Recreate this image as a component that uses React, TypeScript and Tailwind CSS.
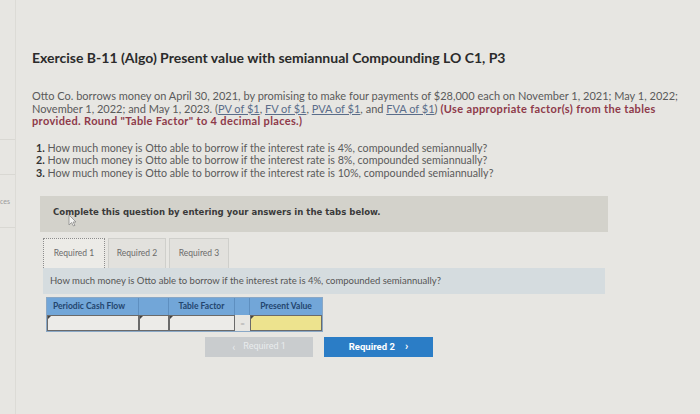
import React from "react";

const Cursor = () => (
  <svg width="9" height="13" viewBox="0 0 9 13" className="absolute left-[68px] top-[214px]">
    <path d="M1 1 L1 11 L3.5 8.5 L5.5 12 L7 11.3 L5 8 L8 8 Z" fill="#f4f4f2" stroke="#8a8a8a" strokeWidth="0.8" />
  </svg>
);

const Mark = () => (
  <span className="absolute left-0 top-0 w-0 h-0 border-l-[3px] border-l-[#444] border-b-[3px] border-b-transparent"></span>
);

export default function App() {
  return (
    <div className="relative w-[700px] h-[414px] bg-[#e7e6e2] flex overflow-hidden" style={{ fontFamily: "Lato, 'Open Sans', sans-serif" }}>
      {/* left sidebar */}
      <div className="w-[16px] shrink-0 flex flex-col pt-[139px] border-r border-[#dcdbd6]">
        <div className="h-[36px] border-y border-[#d9d8d3]"></div>
        <div className="h-[53px] border-b border-[#d9d8d3] flex items-center">
          <span className="text-[7px] text-[#9a9a9a] leading-none">ces</span>
        </div>
      </div>

      <div className="flex-1 pl-[16px] pt-[49px]">
        <h1 className="text-[14px] leading-[18px] font-bold text-[#2b2b2b]">
          Exercise B-11 (Algo) Present value with semiannual Compounding LO C1, P3
        </h1>

        <p className="mt-[23px] text-[11px] leading-[12.5px] text-[#5a5a5a] w-[670px]">
          Otto Co. borrows money on April 30, 2021, by promising to make four payments of $28,000 each on November 1, 2021; May 1, 2022;
          <br />
          November 1, 2022; and May 1, 2023. (<span className="underline text-[#5a6d8a]">PV of $1</span>,{" "}
          <span className="underline text-[#5a6d8a]">FV of $1</span>, <span className="underline text-[#5a6d8a]">PVA of $1</span>, and{" "}
          <span className="underline text-[#5a6d8a]">FVA of $1</span>){" "}
          <span className="font-bold text-[#8e3a4a] tracking-[0.35px]">
            (Use appropriate factor(s) from the tables
            <br />
            provided. Round "Table Factor" to 4 decimal places.)
          </span>
        </p>

        <ol className="mt-[14px] ml-[4px] text-[10.7px] leading-[12.5px] text-[#5a5a5a]">
          <li><span className="font-bold text-[#333]">1.</span> How much money is Otto able to borrow if the interest rate is 4%, compounded semiannually?</li>
          <li><span className="font-bold text-[#333]">2.</span> How much money is Otto able to borrow if the interest rate is 8%, compounded semiannually?</li>
          <li><span className="font-bold text-[#333]">3.</span> How much money is Otto able to borrow if the interest rate is 10%, compounded semiannually?</li>
        </ol>

        <div className="mt-[17px] ml-[8px] w-[568px] h-[36px] bg-[#d3d2cb] pl-[13px] pt-[10px]">
          <span className="block text-[9.5px] leading-[12px] font-bold text-[#3a3a3a]" style={{ fontFamily: "'DejaVu Sans Condensed', 'DejaVu Sans', sans-serif" }}>
            Complete this question by entering your answers in the tabs below.
          </span>
        </div>

        <div className="ml-[11px] mt-[6px] flex gap-[3px] h-[30px] items-stretch">
          <div className="w-[62px] border border-dotted border-[#8d8d8d] border-b-0 bg-[#ecebe7] flex items-center justify-center text-[8.5px] text-[#6a6a6a]">Required 1</div>
          <div className="w-[58px] border border-[#cfcfcb] border-b-0 bg-[#e2e1dd] flex items-center justify-center text-[8.5px] text-[#6a6a6a]">Required 2</div>
          <div className="w-[60px] border border-[#cfcfcb] border-b-0 bg-[#e2e1dd] flex items-center justify-center text-[8.5px] text-[#6a6a6a]">Required 3</div>
        </div>

        <div className="ml-[11px] w-[562px] h-[26px] bg-[#d5dcdf] pl-[7px] flex items-center text-[9.5px] text-[#555]">
          How much money is Otto able to borrow if the interest rate is 4%, compounded semiannually?
        </div>

        <div className="ml-[14px] mt-[3px] w-[277px] border border-[#8aa8c6]">
          <div className="flex h-[17px] bg-[#72a6d8] text-[8.5px] font-bold text-[#23456e]">
            <div className="w-[92px] border-r border-[#5e8fc0] flex items-center pl-[6px]">Periodic Cash Flow</div>
            <div className="w-[30px] border-r border-[#5e8fc0]"></div>
            <div className="w-[66px] border-r border-[#5e8fc0] flex items-center justify-center">Table Factor</div>
            <div className="w-[15px] border-r border-[#5e8fc0]"></div>
            <div className="flex-1 flex items-center justify-center">Present Value</div>
          </div>
          <div className="flex h-[16px] bg-[#e7e6e2]">
            <div className="relative w-[92px] border border-[#6a6a6a] bg-[#ecebe8]"><Mark /></div>
            <div className="relative w-[30px] border border-[#6a6a6a] bg-[#ecebe8]"><Mark /></div>
            <div className="relative w-[66px] border border-[#6a6a6a] bg-[#ecebe8]"><Mark /></div>
            <div className="w-[15px] flex items-center justify-center text-[8px] text-[#aaa]">=</div>
            <div className="relative flex-1 border border-[#6a6a6a] bg-[#ede38e]"><Mark /></div>
          </div>
        </div>

        <div className="ml-[173px] mt-[5px] flex gap-[11px]">
          <div className="w-[108px] h-[20px] bg-[#c9ccce] flex items-center justify-center text-[9px] text-[#e8ebed] gap-[8px]" style={{ fontFamily: "Roboto, sans-serif" }}>
            <span className="text-[10px]">‹</span><span>Required 1</span>
          </div>
          <div className="w-[109px] h-[20px] bg-[#2b7dc6] flex items-center justify-center text-[9.5px] font-bold text-white gap-[10px]" style={{ fontFamily: "Roboto, sans-serif" }}>
            <span>Required 2</span><span className="text-[11px]">›</span>
          </div>
        </div>
      </div>
      <Cursor />
    </div>
  );
}
